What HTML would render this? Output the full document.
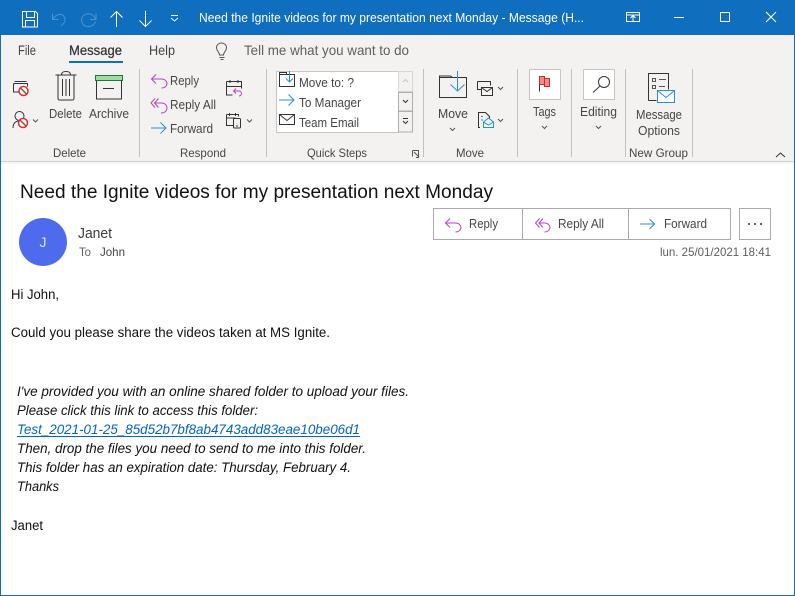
<!DOCTYPE html>
<html><head><meta charset="utf-8"><title>Message</title>
<style>
html,body{margin:0;padding:0;background:#fff}
svg{display:block;font-family:"Liberation Sans",sans-serif}
.r{font-size:12.5px;fill:#484644}
.t{font-size:14px;fill:#444}
.g{font-size:12px;fill:#484644}
.b{font-size:13.5px;fill:#111}
.i{font-style:italic}
.s{fill:none;stroke:#333;stroke-width:1}
.p{fill:none;stroke:#b146c2;stroke-width:1}
.a{fill:none;stroke:#2b8fd6;stroke-width:1}
.w{fill:none;stroke:#fff;stroke-width:1}
.c{fill:none;stroke:#555;stroke-width:1}
</style></head><body>
<svg width="795" height="596" viewBox="0 0 795 596" xmlns="http://www.w3.org/2000/svg">
<rect width="795" height="596" fill="#fff"/>
<rect width="795" height="35" fill="#106ebe"/>
<rect y="35" width="795" height="126" fill="#f3f2f1"/>
<rect y="161" width="795" height="1" fill="#d2d0ce"/>
<rect y="162" width="795" height="2" fill="#f6f6f6"/>
<rect x="0" y="0" width="1" height="596" fill="#106ebe"/>
<rect x="794" y="0" width="1" height="596" fill="#106ebe"/>
<rect x="0" y="595" width="795" height="1" fill="#106ebe"/>

<!-- title bar -->
<path class="w" d="M22.500 11.500h13l2 2v13.500h-15zM26.500 11.500v6h8v-6M25.500 27v-6.500h9V27"/>
<path d="M52.500 13.500v6h6M53 19c3-5 8-6 10.500-3 3 3 1.500 7-2.500 10" fill="none" stroke="#4a94d2" stroke-width="1"/>
<path d="M96 13.500v6h-6M95.500 19c-2-5-8-7-12-3.500-3.500 3.500-2.500 10 4 11 4 .5 7-2 8-5" fill="none" stroke="#4a94d2" stroke-width="1"/>
<path class="w" d="M116.500 27V11.500M110.500 17.500l6-6 6 6"/>
<path class="w" d="M145.500 11V26.500M139.500 20.500l6 6 6-6"/>
<path class="w" d="M171 15.500h7M171 18l3.500 3 3.500-3"/>
<text x="199" y="22" font-size="13" fill="#fff" textLength="385" lengthAdjust="spacingAndGlyphs">Need the Ignite videos for my presentation next Monday  -  Message (H...</text>
<path class="w" d="M626.500 12.500h13v9h-13zM626.500 15h13M633 21v-5M630.500 18l2.500-2.500 2.500 2.500"/>
<path class="w" d="M674 17.500h10"/>
<rect class="w" x="720.500" y="12.500" width="9" height="9"/>
<path class="w" d="M766 12l10 10M776 12l-10 10"/>

<!-- tabs -->
<text x="18" y="55" class="t" textLength="18" lengthAdjust="spacingAndGlyphs">File</text>
<text x="69" y="55" class="t" textLength="53" lengthAdjust="spacingAndGlyphs" style="fill:#333;stroke:#333;stroke-width:.25">Message</text>
<text x="149" y="55" class="t" textLength="26" lengthAdjust="spacingAndGlyphs">Help</text>
<rect x="69" y="61" width="54" height="2" fill="#106ebe"/>
<path d="M219.500 55c0-3-3-3.500-3-7.500 0-2.500 2.300-4.500 5-4.500s5 2 5 4.500c0 4-3 4.500-3 7.500zM219.500 57.500h5M220.500 59.500h3" fill="none" stroke="#555" stroke-width="1"/>
<text x="244" y="55" class="t" textLength="165" lengthAdjust="spacingAndGlyphs" style="fill:#605e5c">Tell me what you want to do</text>

<!-- dividers -->
<g fill="#c4c2c0">
<rect x="139" y="69" width="1" height="88"/><rect x="266" y="69" width="1" height="88"/>
<rect x="423" y="69" width="1" height="88"/><rect x="517" y="69" width="1" height="88"/>
<rect x="571" y="69" width="1" height="88"/><rect x="625" y="69" width="1" height="88"/>
<rect x="692" y="69" width="1" height="88"/></g>

<!-- group labels -->
<text x="53" y="157" class="g" textLength="33" lengthAdjust="spacingAndGlyphs">Delete</text>
<text x="180" y="157" class="g" textLength="46" lengthAdjust="spacingAndGlyphs">Respond</text>
<text x="307" y="157" class="g" textLength="60" lengthAdjust="spacingAndGlyphs">Quick Steps</text>
<text x="456" y="157" class="g" textLength="28" lengthAdjust="spacingAndGlyphs">Move</text>
<text x="629" y="157" class="g" textLength="59" lengthAdjust="spacingAndGlyphs">New Group</text>

<!-- delete group -->
<path class="s" d="M14.500 81.500h12M13.500 83.500h14v3M13.500 83.500v8.500h8"/>
<circle cx="23.500" cy="91" r="4.500" fill="#fff" stroke="#d13438" stroke-width="1.500"/><path d="M20.500 88l6 6" stroke="#d13438" stroke-width="1.500"/>
<circle cx="19.500" cy="116" r="4.500" class="s"/><path class="s" d="M13 128c0-5 3-7 6-7"/>
<circle cx="23" cy="123" r="4.500" fill="#fff" stroke="#d13438" stroke-width="1.500"/><path d="M20 120l6 6" stroke="#d13438" stroke-width="1.500"/>
<path class="c" d="M33 119.500l2.500 2.500 2.500-2.500"/>
<path class="s" d="M55.500 75h21M61.500 75c0-3 2-3.500 4.500-3.500s4.500.5 4.500 3.500M58 75v23.500a1.500 1.500 0 0 0 1.500 1.500h13a1.500 1.500 0 0 0 1.500-1.500V75M62.500 79v17M66 79v17M69.500 79v17"/>
<rect x="95.500" y="75.500" width="27" height="5" fill="#9fdc9f" stroke="#217346"/>
<path class="s" d="M96.500 80.500V99h25V80.500M103 88.500h11"/>
<text x="49" y="118" class="r" textLength="33" lengthAdjust="spacingAndGlyphs">Delete</text>
<text x="89" y="118" class="r" textLength="40" lengthAdjust="spacingAndGlyphs">Archive</text>

<!-- respond -->
<path class="p" d="M151.500 79h10c4 0 5.500 3 5.500 4.500s-1 4.500-5.500 4.500M156 74.500L151.500 79l4.500 4.500"/>
<path class="p" d="M155 103h6.500c4 0 5.500 3 5.500 5s-1.500 5-6 5M158.500 98.500L154.500 103l4 4.500M155 98.500L151 103l4 4.500"/>
<path class="a" d="M151 128h15M160.500 122.500l5.500 5.500-5.500 5.500"/>
<text x="170" y="85" class="r" textLength="29" lengthAdjust="spacingAndGlyphs">Reply</text>
<text x="170" y="109" class="r" textLength="46" lengthAdjust="spacingAndGlyphs">Reply All</text>
<text x="170" y="133" class="r" textLength="43" lengthAdjust="spacingAndGlyphs">Forward</text>
<path class="s" d="M226.500 81.500h15v7M226.500 81.500v13.500h6M226.500 86.500h15M230 80v3M238 80v3"/>
<path class="p" d="M234 91h5c3 0 3.500 5 0 5M236 88.500L233.500 91l2.500 2.500"/>
<path class="s" d="M226.500 114.500h12v2M226.500 114.500v11h6.500M229.500 113v3M235.500 113v3M226.500 118h9"/>
<rect class="s" x="233.500" y="118.500" width="7" height="9.500" rx="1"/><path class="s" d="M236 126h2"/>
<path class="c" d="M247 119.500l2.500 2.500 2.500-2.500"/>

<!-- quick steps -->
<rect x="276.500" y="71.500" width="122" height="61" fill="#fff" stroke="#c8c6c4"/>
<rect x="398.500" y="71.500" width="14" height="20" fill="#f3f2f1" stroke="#d8d6d4"/>
<rect x="398.500" y="92.500" width="14" height="18.500" fill="#f3f2f1" stroke="#b0aeac"/>
<rect x="398.500" y="111.500" width="14" height="20.500" fill="#f3f2f1" stroke="#b0aeac"/>
<path d="M403 82l2.500-2.500 2.500 2.500" fill="none" stroke="#c8c6c4"/>
<path d="M403 100l2.500 2.500 2.500-2.500" fill="none" stroke="#333"/>
<path d="M403 118.500h5M403 121l2.500 2.500 2.500-2.500" fill="none" stroke="#333"/>
<path class="s" d="M279.500 74.500v12h15v-12h-15M279.500 74.500v-2h7v2"/>
<path class="a" d="M289.500 71v11M286 78.500l3.500 3.500 3.500-3.500"/>
<path class="a" d="M279 100h15M288.500 94.500l5.500 5.500-5.500 5.500"/>
<rect class="s" x="279.500" y="114.500" width="15" height="10"/><path class="s" d="M279.500 114.500l7.500 6 7.500-6"/>
<text x="299" y="87" class="r" textLength="55" lengthAdjust="spacingAndGlyphs">Move to: ?</text>
<text x="299" y="107" class="r" textLength="62" lengthAdjust="spacingAndGlyphs">To Manager</text>
<text x="299" y="127" class="r" textLength="60" lengthAdjust="spacingAndGlyphs">Team Email</text>
<path d="M412.500 150.500h6v7M412.500 150.500v6M414 152l5 5M416 157.500h3" fill="none" stroke="#555"/>

<!-- move -->
<path class="s" d="M439.500 97.500v-20h27v20zM439.500 77.500v-1.500h11l2 1.500"/>
<path class="a" d="M457.500 71v20M450.500 84.500l7 6.500 7-6.500"/>
<text x="438" y="118" class="r" textLength="30" lengthAdjust="spacingAndGlyphs">Move</text>
<path class="c" d="M450 128l2.500 2.500 2.500-2.500"/>
<path class="s" d="M477.500 81.500h13v4M477.500 81.500v8h4.500"/>
<rect class="s" x="481.500" y="87.500" width="11" height="8"/><path class="s" d="M481.500 87.500l5.500 4 5.500-4"/>
<path class="c" d="M498 87l2.500 2.500 2.500-2.500"/>
<path d="M480 127.500h-1.500v-15h7l4 4v2" fill="none" stroke="#333"/>
<path d="M481 116.500h2M481 120h2" stroke="#2b8fd6"/>
<path class="a" d="M483.500 122l5-4 5 4v5.500h-10zM483.500 122l5 3 5-3"/>
<path class="c" d="M498 119l2.500 2.500 2.500-2.500"/>

<!-- tags -->
<rect x="529.500" y="69.500" width="31" height="30" fill="#fff" stroke="#c8c6c4"/>
<path d="M539.500 77v14.500" stroke="#333"/>
<rect x="539.500" y="76.500" width="5" height="8" fill="#f4888c" stroke="#c72c2c"/>
<rect x="544.500" y="78.500" width="5" height="8" fill="#f4888c" stroke="#c72c2c"/>
<text x="533" y="116" class="r" textLength="23" lengthAdjust="spacingAndGlyphs">Tags</text>
<path class="c" d="M542 126l2.500 2.500 2.500-2.500"/>

<!-- editing -->
<rect x="583.500" y="69.500" width="31" height="30" fill="#fff" stroke="#c8c6c4"/>
<circle cx="604" cy="82" r="5.500" class="s"/><path d="M600 86l-7 6.500" stroke="#333"/>
<text x="580" y="116" class="r" textLength="37" lengthAdjust="spacingAndGlyphs">Editing</text>
<path class="c" d="M596 126l2.500 2.500 2.500-2.500"/>

<!-- message options -->
<path class="s" d="M648.500 100.500v-27h20v16"/>
<path class="s" d="M648.500 100.500h8"/>
<rect x="652.500" y="78.500" width="3" height="3" class="c"/><rect x="652.500" y="85.500" width="3" height="3" class="c"/>
<path class="c" d="M659 79.500h7M659 86.500h6"/>
<rect x="657.500" y="90.500" width="17" height="12" fill="#fff" stroke="#2b8fd6"/>
<path class="a" d="M658 91l8 6.500 8-6.500"/>
<text x="636" y="119" class="r" textLength="46" lengthAdjust="spacingAndGlyphs">Message</text>
<text x="638" y="135" class="r" textLength="42" lengthAdjust="spacingAndGlyphs">Options</text>
<path d="M776 157l4.500-4 4.500 4" fill="none" stroke="#333"/>

<!-- header -->
<text x="20" y="198" font-size="19" fill="#111" textLength="473" lengthAdjust="spacingAndGlyphs">Need the Ignite videos for my presentation next Monday</text>
<circle cx="43" cy="242" r="24" fill="#4f6bed"/>
<text x="43" y="247" font-size="14" fill="#e8e4fa" text-anchor="middle">J</text>
<text x="78" y="238" font-size="14.500" fill="#3b3a39" textLength="34" lengthAdjust="spacingAndGlyphs">Janet</text>
<text x="79" y="256" font-size="12" fill="#605e5c" textLength="12" lengthAdjust="spacingAndGlyphs">To</text>
<text x="100" y="256" font-size="12" fill="#444" textLength="25" lengthAdjust="spacingAndGlyphs">John</text>

<rect x="433.500" y="208.500" width="297" height="31" fill="#fff" stroke="#ababab"/>
<path d="M522.500 208v31M628.500 208v31" stroke="#ababab"/>
<rect x="739.500" y="208.500" width="31" height="31" fill="#fff" stroke="#ababab"/>
<circle cx="749" cy="224" r="1" fill="#333"/><circle cx="755" cy="224" r="1" fill="#333"/><circle cx="761" cy="224" r="1" fill="#333"/>
<path class="p" d="M445.500 223h10c4 0 5.500 3 5.500 4.500s-1.500 4.500-5.500 4.500M450 218.500l-4.500 4.500 4.500 4.500"/>
<path class="p" d="M539.500 223h5c4 0 5.500 3 5.500 4.500s-1.500 4.500-5.500 4.500M543 218.500L539 223l4 4.500M539.500 218.500L535.500 223l4 4.500"/>
<path class="a" d="M640 224h14.500M649.500 219l5 5-5 5"/>
<text x="469" y="228" class="r" textLength="29" lengthAdjust="spacingAndGlyphs">Reply</text>
<text x="558" y="228" class="r" textLength="46" lengthAdjust="spacingAndGlyphs">Reply All</text>
<text x="664" y="228" class="r" textLength="43" lengthAdjust="spacingAndGlyphs">Forward</text>
<text x="660" y="256" font-size="12" fill="#605e5c" textLength="111" lengthAdjust="spacingAndGlyphs">lun. 25/01/2021 18:41</text>

<!-- body -->
<text x="11" y="299" class="b" textLength="48" lengthAdjust="spacingAndGlyphs">Hi John,</text>
<text x="11" y="337" class="b" textLength="319" lengthAdjust="spacingAndGlyphs">Could you please share the videos taken at MS Ignite.</text>
<text x="17" y="396" class="b i" textLength="392" lengthAdjust="spacingAndGlyphs">I've provided you with an online shared folder to upload your files.</text>
<text x="17" y="415" class="b i" textLength="241" lengthAdjust="spacingAndGlyphs">Please click this link to access this folder:</text>
<text x="17" y="434" class="b i" style="fill:#0563c1" textLength="343" lengthAdjust="spacingAndGlyphs">Test_2021-01-25_85d52b7bf8ab4743add83eae10be06d1</text>
<rect x="17" y="436" width="343" height="1" fill="#0563c1"/>
<text x="17" y="453" class="b i" textLength="349" lengthAdjust="spacingAndGlyphs">Then, drop the files you need to send to me into this folder.</text>
<text x="17" y="472" class="b i" textLength="334" lengthAdjust="spacingAndGlyphs">This folder has an expiration date: Thursday, February 4.</text>
<text x="17" y="491" class="b i" textLength="42" lengthAdjust="spacingAndGlyphs">Thanks</text>
<text x="11" y="530" class="b" textLength="32" lengthAdjust="spacingAndGlyphs">Janet</text>
</svg>
</body></html>
